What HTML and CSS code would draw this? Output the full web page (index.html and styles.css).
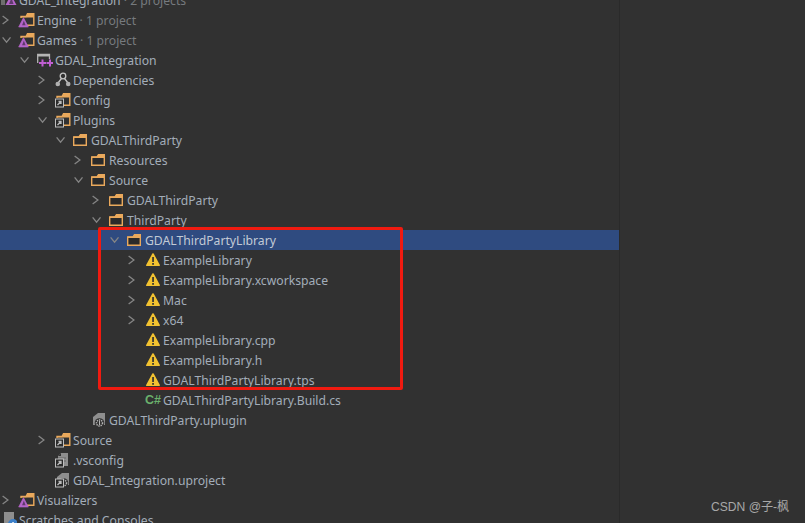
FILE: index.html
```html
<!DOCTYPE html>
<html lang="en">
<head>
<meta charset="utf-8">
<title>Project tree</title>
<link rel="stylesheet" href="styles.css">
</head>
<body>
<svg class="defs" width="0" height="0" aria-hidden="true">
  <defs>
    <symbol id="right" viewBox="0 0 16 16"><path d="M3 3.500 9 8 3 12.500" fill="none" stroke="#858585" stroke-width="1.500"/></symbol>
    <symbol id="down" viewBox="0 0 16 16"><path d="M3 5 7.500 10.500 12 5" fill="none" stroke="#858585" stroke-width="1.500"/></symbol>
    <symbol id="folder" viewBox="0 0 16 16"><path d="M.7 5V13.300H13.300V2.700H7.500L6 5Z" fill="#2a2a2a" stroke="#eaa95c" stroke-width="1.400"/><path d="M.7 4.500H6L7.500 2.500H13.300V6H.7Z" fill="#eaa95c"/></symbol>
    <symbol id="ofolder" viewBox="0 0 16 16"><path d="M2 6V4.500H7L8.500 1.800H14.800V13.300H6" fill="none" stroke="#eaa95c" stroke-width="1.400"/><path d="M2 4.500H7L8.500 2H14.800V5.500H2Z" fill="#eaa95c"/></symbol>
    <symbol id="link" viewBox="0 0 16 16"><rect x=".5" y="7" width="8" height="8" fill="#2b2b2b" stroke="#bdbdbd" stroke-width="1"/><path d="M2.500 13 6 9.500M3.500 9.500H6V12" fill="none" stroke="#bdbdbd" stroke-width="1.300"/></symbol>
    <symbol id="tri" viewBox="0 0 16 16"><path d="M8 1 1 14.500H15Z" fill="#b565c8" stroke="#b565c8" stroke-linejoin="round"/><path d="M8.500 5 6 12H11Z" fill="#5f3a6c"/></symbol>
    <symbol id="uetop" viewBox="0 0 16 16"><path d="M10 3 4.500 13H15.500Z" fill="#b565c8"/><path d="M10.500 6 8 12H12.500Z" fill="#5f3a6c"/><path d="M0 8H4V13H0Z" fill="#6e6e6e"/></symbol>
    <symbol id="warn" viewBox="0 0 16 16"><path d="M8 2 1.800 13.300H14.200Z" fill="#f2c230" stroke="#f2c230" stroke-width="1.600" stroke-linejoin="round"/><rect x="7.200" y="5" width="1.700" height="5" fill="#313131"/><rect x="7.200" y="11" width="1.700" height="1.800" fill="#313131"/></symbol>
    <symbol id="file" viewBox="0 0 16 16"><path d="M6 1H13V14H3V4Z" fill="#8e8e8e"/><path d="M6 1V4H3Z" fill="#313131"/><path d="M3 6H11M3 9H11" stroke="#666"/></symbol>
    <symbol id="scratch" viewBox="0 0 16 16"><path d="M3 0H13V14H3Z" fill="#8e8e8e"/><circle cx="12" cy="12" r="5" fill="#3d80c9"/><rect x="11.200" y="10" width="1.700" height="5" fill="#dfe9f4"/></symbol>
    <symbol id="gear" viewBox="0 0 16 16"><path d="M7 1H14V13H2V5Z" fill="#8e8e8e"/><circle cx="8.500" cy="11" r="4.800" fill="#313131"/><circle cx="8.500" cy="11" r="3" fill="none" stroke="#b4b4b4" stroke-width="1.500" stroke-dasharray="1.300 .9"/><path d="M8.500 9V13" stroke="#b4b4b4"/></symbol>
    <symbol id="deps" viewBox="0 0 16 16"><circle cx="8" cy="4" r="2.800" fill="none" stroke="#c4c4c4" stroke-width="1.300"/><path d="M6.500 6.500 3 11M9.500 6.500 13 11" stroke="#c4c4c4" stroke-width="1.300"/><circle cx="2.800" cy="12" r="2.300" fill="#b0b0b0"/><circle cx="13.200" cy="12" r="2.300" fill="#b0b0b0"/></symbol>
    <symbol id="proj" viewBox="0 0 16 16"><path d="M.7 11V2.500H12.500V7" fill="none" stroke="#b4b4b4" stroke-width="1.300"/><path d="M.7 2H12.500V4.500H.7Z" fill="#b4b4b4"/><path d="M4.500 7.500H6.500V10H9V12H6.500V14.500H4.500V12H2V10H4.500ZM12 7.500H14V10H16V12H14V14.500H12V12H9.500V10H12Z" fill="#c05fd2"/></symbol>
  </defs>
</svg>
<div class="app">
  <main class="tree">
    <div class="row root"><svg class="icon"><use href="#uetop"/></svg><span class="name">GDAL_Integration<span class="hint"> · 2 projects</span></span></div>
    <div class="row d0"><svg class="arrow"><use href="#right"/></svg><span class="icon-stack"><svg class="icon"><use href="#ofolder"/></svg><svg class="icon badge-tri"><use href="#tri"/></svg></span><span class="name">Engine<span class="hint"> · 1 project</span></span></div>
    <div class="row d0"><svg class="arrow"><use href="#down"/></svg><span class="icon-stack"><svg class="icon"><use href="#ofolder"/></svg><svg class="icon badge-tri"><use href="#tri"/></svg></span><span class="name">Games<span class="hint"> · 1 project</span></span></div>
    <div class="row d1"><svg class="arrow"><use href="#down"/></svg><svg class="icon"><use href="#proj"/></svg><span class="name">GDAL_Integration</span></div>
    <div class="row d2"><svg class="arrow"><use href="#right"/></svg><svg class="icon"><use href="#deps"/></svg><span class="name">Dependencies</span></div>
    <div class="row d2"><svg class="arrow"><use href="#right"/></svg><span class="icon-stack"><svg class="icon"><use href="#ofolder"/></svg><svg class="icon badge-link"><use href="#link"/></svg></span><span class="name">Config</span></div>
    <div class="row d2"><svg class="arrow"><use href="#down"/></svg><span class="icon-stack"><svg class="icon"><use href="#ofolder"/></svg><svg class="icon badge-link"><use href="#link"/></svg></span><span class="name">Plugins</span></div>
    <div class="row d3"><svg class="arrow"><use href="#down"/></svg><svg class="icon"><use href="#folder"/></svg><span class="name">GDALThirdParty</span></div>
    <div class="row d4"><svg class="arrow"><use href="#right"/></svg><svg class="icon"><use href="#folder"/></svg><span class="name">Resources</span></div>
    <div class="row d4"><svg class="arrow"><use href="#down"/></svg><svg class="icon"><use href="#folder"/></svg><span class="name">Source</span></div>
    <div class="row d5"><svg class="arrow"><use href="#right"/></svg><svg class="icon"><use href="#folder"/></svg><span class="name">GDALThirdParty</span></div>
    <div class="row d5"><svg class="arrow"><use href="#down"/></svg><svg class="icon"><use href="#folder"/></svg><span class="name">ThirdParty</span></div>
    <div class="row d6 selected"><svg class="arrow"><use href="#down"/></svg><svg class="icon"><use href="#folder"/></svg><span class="name">GDALThirdPartyLibrary</span></div>
    <div class="row d7"><svg class="arrow"><use href="#right"/></svg><svg class="icon"><use href="#warn"/></svg><span class="name">ExampleLibrary</span></div>
    <div class="row d7"><svg class="arrow"><use href="#right"/></svg><svg class="icon"><use href="#warn"/></svg><span class="name">ExampleLibrary.xcworkspace</span></div>
    <div class="row d7"><svg class="arrow"><use href="#right"/></svg><svg class="icon"><use href="#warn"/></svg><span class="name">Mac</span></div>
    <div class="row d7"><svg class="arrow"><use href="#right"/></svg><svg class="icon"><use href="#warn"/></svg><span class="name">x64</span></div>
    <div class="row d7"><span class="arrow"></span><svg class="icon"><use href="#warn"/></svg><span class="name">ExampleLibrary.cpp</span></div>
    <div class="row d7"><span class="arrow"></span><svg class="icon"><use href="#warn"/></svg><span class="name">ExampleLibrary.h</span></div>
    <div class="row d7"><span class="arrow"></span><svg class="icon"><use href="#warn"/></svg><span class="name">GDALThirdPartyLibrary.tps</span></div>
    <div class="row d7"><span class="arrow"></span><span class="icon csharp">C#</span><span class="name">GDALThirdPartyLibrary.Build.cs</span></div>
    <div class="row d4"><span class="arrow"></span><svg class="icon"><use href="#gear"/></svg><span class="name">GDALThirdParty.uplugin</span></div>
    <div class="row d2"><svg class="arrow"><use href="#right"/></svg><span class="icon-stack"><svg class="icon"><use href="#ofolder"/></svg><svg class="icon badge-link"><use href="#link"/></svg></span><span class="name">Source</span></div>
    <div class="row d2"><span class="arrow"></span><span class="icon-stack"><svg class="icon"><use href="#file"/></svg><svg class="icon badge-link"><use href="#link"/></svg></span><span class="name">.vsconfig</span></div>
    <div class="row d2"><span class="arrow"></span><span class="icon-stack"><svg class="icon"><use href="#gear"/></svg><svg class="icon badge-link"><use href="#link"/></svg></span><span class="name">GDAL_Integration.uproject</span></div>
    <div class="row d0"><svg class="arrow"><use href="#right"/></svg><span class="icon-stack"><svg class="icon"><use href="#ofolder"/></svg><svg class="icon badge-tri"><use href="#tri"/></svg></span><span class="name">Visualizers</span></div>
    <div class="row root"><svg class="icon"><use href="#scratch"/></svg><span class="name">Scratches and Consoles</span></div>
  </main>
  <aside class="side"></aside>
</div>
<div class="callout"></div>
<div class="watermark">CSDN @子-枫</div>
</body>
</html>
```
FILE: styles.css
```css
* { box-sizing: border-box; }
html, body { margin: 0; height: 100%; }
body {
  width: 805px;
  height: 523px;
  overflow: hidden;
  background: #313131;
  font-family: "Noto Sans", "Noto Sans CJK SC", sans-serif;
  font-size: 12.2px;
  color: #a3adb9;
  position: relative;
}
.defs { position: absolute; }
.app { display: flex; height: 523px; overflow: hidden; }
.tree { width: 619px; flex: none; margin-top: -10px; }
.side { flex: 1; border-left: 1px solid #2a2a2a; }
.row { display: flex; align-items: center; height: 20px; white-space: nowrap; }
.root { padding-left: 1px; }
.d0 { padding-left: 0; }
.d1 { padding-left: 18px; }
.d2 { padding-left: 36px; }
.d3 { padding-left: 54px; }
.d4 { padding-left: 72px; }
.d5 { padding-left: 90px; }
.d6 { padding-left: 108px; }
.d7 { padding-left: 126px; }
.selected { background: #2f4b80; color: #c2cad6; }
.arrow { width: 14px; height: 14px; margin-right: 5px; flex: none; }
.icon { width: 16px; height: 16px; flex: none; display: block; }
.icon-stack { position: relative; width: 16px; height: 16px; flex: none; }
.badge-tri { position: absolute; left: -1px; top: 5px; width: 11px; height: 11px; }
.badge-link { position: absolute; left: 0; top: 0; }
.csharp {
  font-family: "Liberation Sans", sans-serif;
  font-weight: 700;
  font-size: 12.5px;
  line-height: 16px;
  color: #6ab06c;
  text-align: center;
}
.name { margin-left: 2px; }
.hint { color: #767a7e; }
.callout {
  position: absolute;
  left: 98px;
  top: 227px;
  width: 305px;
  height: 163px;
  border: 3px solid #f01a10;
  border-radius: 2px;
}
.watermark {
  position: absolute;
  left: 711px;
  top: 499px;
  font-family: "Liberation Sans", "Noto Sans CJK SC", sans-serif;
  font-size: 12.1px;
  line-height: 16px;
  color: #a8a8a8;
}
```
